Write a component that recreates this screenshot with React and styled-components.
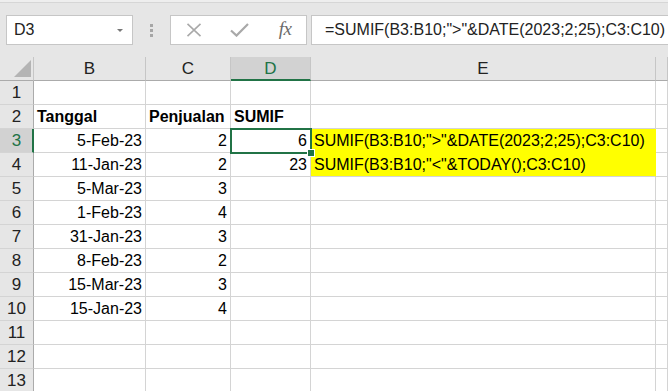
import React from "react";
import styled, { createGlobalStyle, css } from "styled-components";

const Global = createGlobalStyle`
  html, body { margin: 0; padding: 0; background: #ffffff; overflow: hidden; }
  * { box-sizing: border-box; }
`;

const GREEN = "#217346";
const GRID = "#d4d4d4";

const Window = styled.div`
  width: 668px;
  height: 391px;
  overflow: hidden;
  background: #ffffff;
  display: flex;
  flex-direction: column;
`;

const Toolbar = styled.div`
  height: 57px;
  flex: none;
  background: #e6e6e6;
  border-top: 2px solid #eeeeee;
  box-shadow: inset 0 1px 0 #d6d6d6;
  display: flex;
  align-items: flex-start;
  padding-top: 13px;
  padding-left: 6px;
  font-family: "Liberation Sans", Arial, sans-serif;
`;

const Box = styled.div`
  height: 30px;
  background: #ffffff;
  border: 1px solid #c6c6c6;
  display: flex;
  align-items: center;
`;

const NameBox = styled(Box)`
  width: 127px;
  padding-left: 7px;
  padding-right: 9px;
  justify-content: space-between;
  font-size: 16px;
  color: #222;
`;

const Caret = styled.span`
  width: 0;
  height: 0;
  border-left: 3px solid transparent;
  border-right: 3px solid transparent;
  border-top: 3px solid #777;
  margin-top: 1px;
`;

const Grip = styled.div`
  width: 37px;
  height: 30px;
  display: flex;
  flex-direction: column;
  align-items: center;
  justify-content: center;
  gap: 2px;
  & > i {
    display: block;
    width: 3px;
    height: 3px;
    background: #a6a6a6;
  }
`;

const ButtonBox = styled(Box)`
  width: 137px;
  padding-left: 14px;
`;

const IconSlot = styled.span`
  width: ${(p) => p.$w}px;
  margin-right: ${(p) => p.$mr || 0}px;
  display: flex;
  align-items: center;
  justify-content: center;
`;

const Fx = styled.span`
  font-family: "Liberation Serif", "Times New Roman", serif;
  font-style: italic;
  font-size: 19px;
  color: #6b6b6b;
  letter-spacing: -0.5px;
  margin-top: -2px;
`;

const FormulaBox = styled(Box)`
  margin-left: 4px;
  flex: 1;
  margin-right: -20px;
  padding-left: 13px;
  font-size: 16px;
  color: #222;
  white-space: nowrap;
`;

const Sheet = styled.div`
  display: grid;
  grid-template-columns: 34px 112px 85px 80px 345px 1fr;
  grid-auto-rows: 24px;
  font-family: "Liberation Sans", Arial, sans-serif;
  font-size: 16px;
  color: #000;
`;

const Corner = styled.div`
  background: #e6e6e6;
  border-right: 1px solid #c6c6c6;
  border-bottom: 1px solid #ababab;
  display: flex;
  align-items: flex-end;
  justify-content: flex-end;
  padding: 0 2px 3px 0;
`;

const ColHead = styled.div`
  background: ${(p) => (p.$active ? "#d2d2d2" : "#e6e6e6")};
  color: ${(p) => (p.$active ? GREEN : "#222")};
  border-right: 1px solid #c6c6c6;
  border-bottom: ${(p) => (p.$active ? `2px solid ${GREEN}` : "1px solid #ababab")};
  display: flex;
  align-items: center;
  justify-content: center;
  padding-top: ${(p) => (p.$active ? 1 : 0)}px;
  font-size: 17px;
`;

const RowHead = styled.div`
  background: ${(p) => (p.$active ? "#d2d2d2" : "#e6e6e6")};
  color: ${(p) => (p.$active ? GREEN : "#222")};
  border-right: ${(p) => (p.$active ? `2px solid ${GREEN}` : "1px solid #ababab")};
  border-bottom: 1px solid ${GRID};
  display: flex;
  align-items: center;
  justify-content: center;
  padding-left: ${(p) => (p.$active ? 1 : 0)}px;
  font-size: 17px;
`;

const Cell = styled.div`
  position: relative;
  border-right: 1px solid ${GRID};
  border-bottom: 1px solid ${GRID};
  display: flex;
  align-items: center;
  justify-content: ${(p) => (p.$right ? "flex-end" : "flex-start")};
  padding: 1px 3px 0 3px;
  white-space: nowrap;
  font-weight: ${(p) => (p.$bold ? 700 : 400)};
  ${(p) =>
    p.$fill &&
    css`
      background: #ffff00;
      border-right-color: #ffff00;
      border-bottom-color: ${p.$fillBottom ? "#ffff00" : GRID};
      z-index: 1;
    `}
`;

const Selection = styled.div`
  position: absolute;
  left: -1px;
  top: -1px;
  right: -2px;
  bottom: -2px;
  border: 2px solid ${GREEN};
  z-index: 3;
  pointer-events: none;
`;

const Handle = styled.span`
  position: absolute;
  right: -4px;
  bottom: -4px;
  width: 6px;
  height: 6px;
  background: ${GREEN};
  box-shadow: 0 0 0 1px #ffffff;
`;

const cols = ["B", "C", "D", "E", ""];

const rows = [
  [],
  [
    { v: "Tanggal", bold: true },
    { v: "Penjualan", bold: true },
    { v: "SUMIF", bold: true },
  ],
  [
    { v: "5-Feb-23", right: true },
    { v: "2", right: true },
    { v: "6", right: true, sel: true },
    { v: 'SUMIF(B3:B10;">"&DATE(2023;2;25);C3:C10)', fill: true, fillBottom: true },
  ],
  [
    { v: "11-Jan-23", right: true },
    { v: "2", right: true },
    { v: "23", right: true },
    { v: 'SUMIF(B3:B10;"<"&TODAY();C3:C10)', fill: true },
  ],
  [{ v: "5-Mar-23", right: true }, { v: "3", right: true }],
  [{ v: "1-Feb-23", right: true }, { v: "4", right: true }],
  [{ v: "31-Jan-23", right: true }, { v: "3", right: true }],
  [{ v: "8-Feb-23", right: true }, { v: "2", right: true }],
  [{ v: "15-Mar-23", right: true }, { v: "3", right: true }],
  [{ v: "15-Jan-23", right: true }, { v: "4", right: true }],
  [],
  [],
  [],
];

export default function App() {
  return (
    <Window>
      <Global />
      <Toolbar>
        <NameBox>
          <span>D3</span>
          <Caret />
        </NameBox>
        <Grip>
          <i />
          <i />
          <i />
        </Grip>
        <ButtonBox>
          <IconSlot $w={18} $mr={26}>
            <svg width="16" height="14" viewBox="0 0 16 14">
              <path d="M1.5 0.8 L14.5 13.2 M14.5 0.8 L1.5 13.2" stroke="#a9a9a9" strokeWidth="1.6" fill="none" />
            </svg>
          </IconSlot>
          <IconSlot $w={20} $mr={26}>
            <svg width="19" height="14" viewBox="0 0 19 14">
              <path d="M1 7.5 L6.5 12.6 L18 1" stroke="#a9a9a9" strokeWidth="2.2" fill="none" />
            </svg>
          </IconSlot>
          <IconSlot $w={20}>
            <Fx>fx</Fx>
          </IconSlot>
        </ButtonBox>
        <FormulaBox>=SUMIF(B3:B10;"&gt;"&amp;DATE(2023;2;25);C3:C10)</FormulaBox>
      </Toolbar>
      <Sheet>
        <Corner>
          <svg width="17" height="17" viewBox="0 0 17 17">
            <path d="M17 0 L17 17 L0 17 Z" fill="#b4b4b4" />
          </svg>
        </Corner>
        {cols.map((c, i) => (
          <ColHead key={i} $active={c === "D"}>
            {c}
          </ColHead>
        ))}
        {rows.map((r, ri) => (
          <React.Fragment key={ri}>
            <RowHead $active={ri === 2}>{ri + 1}</RowHead>
            {[0, 1, 2, 3, 4].map((ci) => {
              const cell = r[ci];
              return (
                <Cell
                  key={ci}
                  $right={cell?.right}
                  $bold={cell?.bold}
                  $fill={cell?.fill}
                  $fillBottom={cell?.fillBottom}
                >
                  {cell?.v}
                  {cell?.sel && (
                    <Selection>
                      <Handle />
                    </Selection>
                  )}
                </Cell>
              );
            })}
          </React.Fragment>
        ))}
      </Sheet>
    </Window>
  );
}
